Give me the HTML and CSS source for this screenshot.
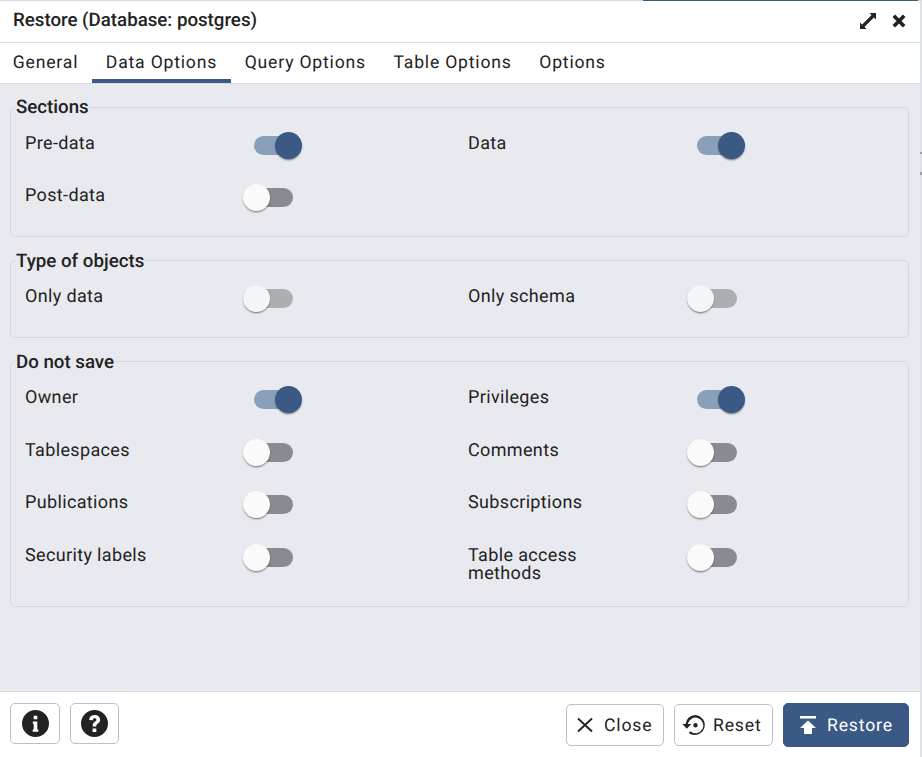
FILE: index.html
```html
<!DOCTYPE html>
<html lang="en">
<head>
<meta charset="utf-8">
<title>Restore</title>
<link rel="stylesheet" href="styles.css">
</head>
<body>
<div class="topline"><span class="topline-accent"></span></div>
<main class="dialog">
  <header class="titlebar">
    <h1 class="title">Restore (Database: postgres)</h1>
    <div class="title-actions">
      <svg class="icon-expand" viewBox="0 0 18 18"><path class="shaft" d="M4 14L14 4"/><path d="M10.500 1h6.500v6.500zM1 10.500V17h6.500z"/></svg>
      <svg class="icon-x" viewBox="0 0 14 14"><path d="M1.800 1.800l10.400 10.400M12.200 1.800L1.800 12.200"/></svg>
    </div>
  </header>
  <nav class="tabs">
    <span class="tab">General</span>
    <span class="tab active">Data Options</span>
    <span class="tab">Query Options</span>
    <span class="tab">Table Options</span>
    <span class="tab">Options</span>
  </nav>
  <section class="content">
    <fieldset class="group">
      <legend>Sections</legend>
      <div class="grid">
        <div class="field"><span class="label">Pre-data</span><span class="switch on"><i class="track"></i><i class="thumb"></i></span></div>
        <div class="field"><span class="label">Data</span><span class="switch on"><i class="track"></i><i class="thumb"></i></span></div>
        <div class="field"><span class="label">Post-data</span><span class="switch"><i class="track"></i><i class="thumb"></i></span></div>
      </div>
    </fieldset>
    <fieldset class="group">
      <legend>Type of objects</legend>
      <div class="grid">
        <div class="field"><span class="label">Only data</span><span class="switch disabled"><i class="track"></i><i class="thumb"></i></span></div>
        <div class="field"><span class="label">Only schema</span><span class="switch disabled"><i class="track"></i><i class="thumb"></i></span></div>
      </div>
    </fieldset>
    <fieldset class="group">
      <legend>Do not save</legend>
      <div class="grid">
        <div class="field"><span class="label">Owner</span><span class="switch on"><i class="track"></i><i class="thumb"></i></span></div>
        <div class="field"><span class="label">Privileges</span><span class="switch on"><i class="track"></i><i class="thumb"></i></span></div>
        <div class="field"><span class="label">Tablespaces</span><span class="switch"><i class="track"></i><i class="thumb"></i></span></div>
        <div class="field"><span class="label">Comments</span><span class="switch"><i class="track"></i><i class="thumb"></i></span></div>
        <div class="field"><span class="label">Publications</span><span class="switch"><i class="track"></i><i class="thumb"></i></span></div>
        <div class="field"><span class="label">Subscriptions</span><span class="switch"><i class="track"></i><i class="thumb"></i></span></div>
        <div class="field"><span class="label">Security labels</span><span class="switch"><i class="track"></i><i class="thumb"></i></span></div>
        <div class="field"><span class="label narrow">Table access methods</span><span class="switch"><i class="track"></i><i class="thumb"></i></span></div>
      </div>
    </fieldset>
  </section>
  <footer class="footer">
    <div class="footer-left">
      <button class="btn btn-icon" aria-label="Info"><svg viewBox="0 0 24 24"><path fill-rule="evenodd" d="M12 0a12 12 0 1 0 0 24a12 12 0 0 0 0-24zM10.400 5.200h3.200v3h-3.200zM9.600 10.200h4v7.200h.9v1.900H9.500v-1.900h.9v-5.200h-.8z"/></svg></button>
      <button class="btn btn-icon btn-help" aria-label="Help"><svg viewBox="0 0 24 24"><path fill-rule="evenodd" d="M12 0a12 12 0 1 0 0 24a12 12 0 0 0 0-24zM10.300 16.400h3.300v3.200h-3.300zM7.200 8.800C7.400 6 9.400 4.400 12.200 4.400c2.700 0 4.800 1.700 4.800 4.200 0 1.800-1 2.800-2.200 3.600-.9.600-1.200 1-1.200 1.900v.6h-3.200v-.8c0-1.600.6-2.500 1.900-3.400.9-.6 1.400-1.100 1.400-1.800 0-.8-.6-1.300-1.500-1.300-1 0-1.600.6-1.700 1.600z"/></svg></button>
    </div>
    <div class="footer-right">
      <button class="btn btn-text btn-close"><svg class="ico-close" viewBox="0 0 16 16"><path d="M1 1.500l14 13M15 1.500l-14 13"/></svg>Close</button>
      <button class="btn btn-text btn-reset"><svg class="ico-reset" viewBox="0 0 24 24"><path fill-rule="evenodd" d="M13.500 2a10 10 0 0 0-9.900 9H0.300l4.500 4.800L9.300 11H5.800a7.800 7.800 0 1 1 2.500 7.300l-1.500 1.700A10 10 0 1 0 13.500 2zM13.500 10a2.200 2.200 0 1 0 0 4.400a2.200 2.200 0 0 0 0-4.400z"/></svg>Reset</button>
      <button class="btn btn-primary"><svg class="ico-restore" viewBox="0 0 16 18"><path d="M0 0h16v2.400H0zM8 4.500l8 7.500h-4v6H4v-6H0z"/></svg>Restore</button>
    </div>
  </footer>
</main>
</body>
</html>
```
FILE: styles.css
```css
* { box-sizing: border-box; }
html, body { margin: 0; height: 100%; }
body {
  width: 922px;
  height: 757px;
  overflow: hidden;
  background:
    linear-gradient(#9a9fab, #9a9fab) 920px 152px / 2px 2px no-repeat,
    linear-gradient(#9a9fab, #9a9fab) 920px 172px / 2px 3px no-repeat,
    #dfe1e8;
  font-family: Roboto, "Liberation Sans", sans-serif;
  color: #222222;
  display: flex;
  flex-direction: column;
  text-rendering: geometricPrecision;
}
.topline { height: 1px; flex: none; background: #d6d8e0; }
.topline-accent { display: block; height: 1px; width: 275px; margin-left: 643px; background: #3a5a85; }
.dialog { width: 920px; flex: 1; display: flex; flex-direction: column; background: #fff; min-height: 0; }
.titlebar { height: 42px; flex: none; display: flex; align-items: center; justify-content: space-between; padding: 0 14px 2px 13px; border-bottom: 1px solid #d9dae2; }
.title { margin: 0; font-size: 18.700px; font-weight: 500; line-height: 1; color: #222; }
.title-actions { display: flex; align-items: center; gap: 15px; }
.icon-expand { width: 18px; height: 18px; fill: #222; }
.icon-expand .shaft { fill: none; stroke: #222; stroke-width: 3.200; }
.icon-x { width: 14px; height: 14px; fill: none; stroke: #222; stroke-width: 3.600; }
.tabs { height: 41px; flex: none; display: flex; border-bottom: 1px solid #d9dae2; background: #fff; }
.tab { padding: 0 13.800px; height: 41px; line-height: 40px; font-size: 17.600px; letter-spacing: .8px; color: #222; }
.tab:first-child { margin-left: -1px; }
.tab.active { border-bottom: 4px solid #3a5a85; height: 40px; }
.content { flex: 1; background: #e9eaf0; padding: 14px 11px 0 10px; display: flex; flex-direction: column; gap: 15px; min-height: 0; }
.group { margin: 0; min-width: 0; padding: 0 0 19.500px; border: 1px solid #d6d8e0; border-radius: 5px; }
.group legend { margin-left: 5px; padding: 0; font-size: 18.700px; line-height: 18px; font-weight: 500; color: #222; }
.grid { display: grid; grid-template-columns: 443px 1fr; row-gap: 14.500px; padding: 9.500px 0 0 14px; }
.field { display: flex; align-items: flex-start; min-height: 38px; }
.label { width: 218px; padding: 9px 0 4px; font-size: 18px; line-height: 18px; letter-spacing: .35px; color: #222; }
.label.narrow { width: 160px; }
.field .narrow + .switch { margin-left: 58px; }
.switch { position: relative; width: 59px; height: 38px; flex: none; }
.field:nth-child(even) .switch:not(.on) { transform: translateX(1px); }
.track { position: absolute; left: 11px; top: 10px; width: 39px; height: 19px; border-radius: 10px; background: #8a8b90; }
.thumb { position: absolute; left: 0; top: 6px; width: 27px; height: 27px; border-radius: 50%; background: #fafafa; box-shadow: 0 2px 2px -1px rgba(0,0,0,.4), 0 1px 2px rgba(0,0,0,.2); }
.switch.on .track { background: #8a9fba; }
.switch.on .thumb { left: 32px; background: #3a5a85; }
.switch.disabled .track { background: #adaeb2; }
.switch.disabled .thumb { background: #f4f5f8; }
.footer { height: 66px; flex: none; background: #fff; border-top: 1px solid #d9dae2; display: flex; justify-content: space-between; padding: 11px 11px 0 10px; }
.footer-left, .footer-right { display: flex; align-items: flex-start; gap: 10px; }
.btn { font-family: inherit; font-size: 17.600px; letter-spacing: .85px; color: #222; background: #fff; border: 1px solid #bcbfca; border-radius: 5px; padding: 0; display: flex; align-items: center; justify-content: center; text-rendering: inherit; }
.btn-icon { width: 50px; height: 41px; }
.btn-help { width: 49px; }
.btn-icon svg { width: 27px; height: 27px; fill: #222; }
.btn-text { height: 42px; margin-top: 1px; justify-content: flex-start; padding-top: 2px; }
.btn-text svg, .btn-primary svg { margin-top: -2px; }
.btn-close { width: 98px; padding-left: 10px; gap: 11px; }
.btn-reset { width: 99px; padding-left: 7px; gap: 7px; }
.ico-close { width: 16px; height: 16px; fill: none; stroke: #222; stroke-width: 1.900; }
.ico-reset { width: 24px; height: 24px; fill: #222; }
.btn-primary { width: 126px; height: 44px; justify-content: flex-start; padding: 2px 0 0 16px; gap: 11px; background: #3a5a85; border-color: #3a5a85; color: #fff; }
.ico-restore { width: 16px; height: 18px; fill: #fff; }
```
